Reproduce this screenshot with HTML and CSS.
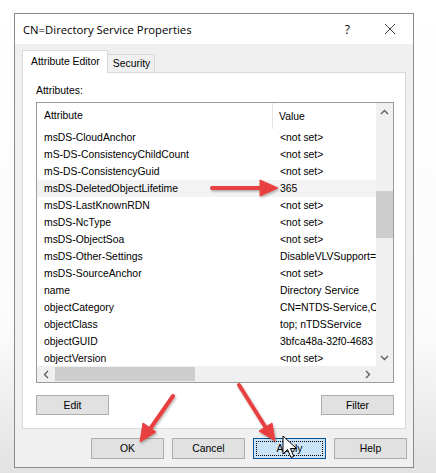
FILE: index.html
```html
<!DOCTYPE html>
<html lang="en">
<head>
    <meta charset="utf-8">
    <title>CN=Directory Service Properties</title>
    <link rel="stylesheet" href="styles.css">
</head>
<body>
    <div class="dialog">
        <div class="titlebar">
            <span class="title">CN=Directory Service Properties</span>
            <span class="help-q">?</span>
            <svg class="close" width="12" height="12" viewBox="0 0 12 12">
                <path d="M1 1 L11 11 M11 1 L1 11" stroke="#333" stroke-width="0.9" fill="none"/>
            </svg>
        </div>

        <div class="tabs">
            <div class="tab active">Attribute Editor</div>
            <div class="tab">Security</div>
        </div>

        <div class="panel">
            <div class="label">Attributes:</div>

            <div class="list">
                <div class="list-top">
                    <div class="list-main">
                        <div class="list-head">
                            <div class="col-attr">Attribute</div>
                            <div class="col-val">Value</div>
                        </div>
                        <div class="rows">
                            <div class="row"><div class="col-attr">msDS-CloudAnchor</div><div class="col-val">&lt;not set&gt;</div></div>
                            <div class="row"><div class="col-attr">mS-DS-ConsistencyChildCount</div><div class="col-val">&lt;not set&gt;</div></div>
                            <div class="row"><div class="col-attr">mS-DS-ConsistencyGuid</div><div class="col-val">&lt;not set&gt;</div></div>
                            <div class="row hover"><div class="col-attr">msDS-DeletedObjectLifetime</div><div class="col-val">365</div></div>
                            <div class="row"><div class="col-attr">msDS-LastKnownRDN</div><div class="col-val">&lt;not set&gt;</div></div>
                            <div class="row"><div class="col-attr">msDS-NcType</div><div class="col-val">&lt;not set&gt;</div></div>
                            <div class="row"><div class="col-attr">msDS-ObjectSoa</div><div class="col-val">&lt;not set&gt;</div></div>
                            <div class="row"><div class="col-attr">msDS-Other-Settings</div><div class="col-val">DisableVLVSupport=</div></div>
                            <div class="row"><div class="col-attr">msDS-SourceAnchor</div><div class="col-val">&lt;not set&gt;</div></div>
                            <div class="row"><div class="col-attr">name</div><div class="col-val">Directory Service</div></div>
                            <div class="row"><div class="col-attr">objectCategory</div><div class="col-val">CN=NTDS-Service,C</div></div>
                            <div class="row"><div class="col-attr">objectClass</div><div class="col-val">top; nTDSService</div></div>
                            <div class="row"><div class="col-attr">objectGUID</div><div class="col-val">3bfca48a-32f0-4683</div></div>
                            <div class="row"><div class="col-attr">objectVersion</div><div class="col-val">&lt;not set&gt;</div></div>
                        </div>
                    </div>
                    <div class="vscroll">
                        <div class="sb-btn">
                            <svg width="9" height="6" viewBox="0 0 9 6"><path d="M1 5 L4.5 1.5 L8 5" stroke="#606060" stroke-width="1.4" fill="none"/></svg>
                        </div>
                        <div class="vtrack"><div class="vthumb"></div></div>
                        <div class="sb-btn">
                            <svg width="9" height="6" viewBox="0 0 9 6"><path d="M1 1 L4.5 4.5 L8 1" stroke="#606060" stroke-width="1.4" fill="none"/></svg>
                        </div>
                    </div>
                </div>
                <div class="hscroll">
                    <div class="sb-btn">
                        <svg width="6" height="9" viewBox="0 0 6 9"><path d="M5 1 L1.5 4.5 L5 8" stroke="#606060" stroke-width="1.4" fill="none"/></svg>
                    </div>
                    <div class="htrack"><div class="hthumb"></div></div>
                    <div class="sb-btn">
                        <svg width="6" height="9" viewBox="0 0 6 9"><path d="M1 1 L4.5 4.5 L1 8" stroke="#606060" stroke-width="1.4" fill="none"/></svg>
                    </div>
                    <div class="corner"></div>
                </div>
            </div>

            <div class="list-buttons">
                <button class="btn">Edit</button>
                <button class="btn">Filter</button>
            </div>
        </div>

        <div class="dialog-buttons">
            <button class="btn">OK</button>
            <button class="btn">Cancel</button>
            <button class="btn focused"><span class="focus-ring">Apply</span></button>
            <button class="btn">Help</button>
        </div>
    </div>

    <!-- annotation arrows and mouse pointer drawn over the dialog -->
    <svg class="annotations" width="436" height="473" viewBox="0 0 436 473">
        <defs>
            <filter id="shadow" x="-20%" y="-20%" width="140%" height="140%">
                <feDropShadow dx="1" dy="1.5" stdDeviation="1.2" flood-color="#000" flood-opacity="0.3"/>
            </filter>
        </defs>
        <g fill="#e8403f" stroke="#e8403f" filter="url(#shadow)">
            <line x1="212" y1="188" x2="262" y2="188" stroke-width="4" stroke-linecap="round"/>
            <polygon points="278,188 260,180 260,196" stroke-width="1" stroke-linejoin="round"/>

            <line x1="173" y1="396" x2="150" y2="429" stroke-width="4" stroke-linecap="round"/>
            <polygon points="140,442 143,423 156,432" stroke-width="1" stroke-linejoin="round"/>

            <line x1="239" y1="385" x2="266" y2="428" stroke-width="4" stroke-linecap="round"/>
            <polygon points="275,441 259,431 272,423" stroke-width="1" stroke-linejoin="round"/>
        </g>
        <path d="M283 436 L283 454 L287.5 449.5 L291 457.5 L293.8 456.3 L290.4 448.5 L296.5 448.5 Z" fill="#fff" stroke="#000" stroke-width="1" stroke-linejoin="round"/>
    </svg>
</body>
</html>
```

FILE: styles.css
```css
body {
    margin: 0;
    width: 436px;
    height: 473px;
    overflow: hidden;
    background: linear-gradient(to bottom, #ffffff 0%, #fbfbfb 70%, #e2e2e2 100%);
    font-family: "Liberation Sans", Arial, sans-serif;
    font-size: 10.4px;
    color: #000000;
}
.dialog {
    margin: 13px 0 0 14px;
    width: 400px;
    height: 455px;
    box-sizing: border-box;
    border: 1px solid #8a8a8a;
    background-color: #f0f0f0;
    display: flex;
    flex-direction: column;
}
.titlebar {
    height: 30px;
    flex: none;
    background-color: #ffffff;
    display: flex;
    align-items: center;
    padding-left: 8px;
}
.title {
    font-family: "Open Sans", "Noto Sans", sans-serif;
    font-size: 11.3px;
    color: #000000;
    flex: 1;
}
.help-q {
    font-family: "Open Sans", sans-serif;
    font-size: 12px;
    margin-right: 34px;
}
.close {
    margin-right: 17px;
}
.tabs {
    margin-top: 6px;
    height: 22px;
    flex: none;
    display: flex;
    align-items: flex-end;
    padding-left: 7px;
}
.tab {
    box-sizing: border-box;
    height: 18px;
    padding: 0 4px 0 5px;
    line-height: 17px;
    border: 1px solid #d9d9d9;
    border-bottom: none;
    border-left: none;
    background-color: #f0f0f0;
}
.tab.active {
    position: relative;
    z-index: 1;
    height: 23px;
    margin-bottom: -1px;
    padding: 0 7px 0 8px;
    line-height: 21px;
    border-left: 1px solid #d9d9d9;
    background-color: #ffffff;
}
.panel {
    margin: 0 7px;
    height: 357px;
    flex: none;
    box-sizing: border-box;
    border: 1px solid #d9d9d9;
    background-color: #ffffff;
    padding: 0 11px 0 13px;
}
.label {
    margin-top: 12px;
    height: 12px;
    line-height: 12px;
    margin-bottom: 5px;
}
.list {
    height: 281px;
    box-sizing: border-box;
    border: 1px solid #9b9b9b;
    display: flex;
    flex-direction: column;
    overflow: hidden;
}
.list-top {
    display: flex;
    height: 263px;
}
.list-main {
    flex: 1;
    overflow: hidden;
}
.list-head {
    display: flex;
    height: 26px;
    align-items: center;
}
.list-head .col-attr {
    border-right: 1px solid #e5e5e5;
    height: 26px;
    line-height: 26px;
}
.rows {
    height: 237px;
    overflow: hidden;
}
.row {
    display: flex;
    height: 17px;
    line-height: 17px;
}
.row.hover {
    background-color: #f3f3f3;
}
.col-attr {
    width: 236px;
    flex: none;
    box-sizing: border-box;
    padding-left: 7px;
    white-space: nowrap;
}
.col-val {
    padding-left: 7px;
    white-space: nowrap;
}
.list-head .col-val {
    padding-left: 6px;
}
.vscroll {
    width: 17px;
    flex: none;
    background-color: #f0f0f0;
    display: flex;
    flex-direction: column;
}
.sb-btn {
    width: 17px;
    height: 17px;
    flex: none;
    display: flex;
    align-items: center;
    justify-content: center;
}
.vtrack {
    flex: 1;
    padding-top: 71px;
}
.vthumb {
    width: 17px;
    height: 47px;
    background-color: #cdcdcd;
}
.hscroll {
    display: flex;
    flex: 1;
    background-color: #f0f0f0;
    align-items: stretch;
}
.hscroll .sb-btn {
    height: auto;
}
.htrack {
    flex: 1;
    padding: 1px 0;
}
.hthumb {
    width: 140px;
    height: 100%;
    margin-left: 1px;
    background-color: #cdcdcd;
}
.corner {
    width: 17px;
    flex: none;
    background-color: #f0f0f0;
}
.list-buttons {
    display: flex;
    justify-content: space-between;
    margin-top: 12px;
}
.btn {
    width: 73px;
    height: 20px;
    box-sizing: border-box;
    border: 1px solid #adadad;
    background-color: #e1e1e1;
    font-family: "Liberation Sans", Arial, sans-serif;
    font-size: 10.4px;
    color: #000000;
    padding: 0;
}
.dialog-buttons {
    display: flex;
    justify-content: flex-end;
    gap: 8px;
    margin-top: 9px;
    padding-right: 6px;
}
.dialog-buttons .btn {
    height: 21px;
}
.btn.focused {
    background-color: #cce4f7;
    border-color: #005499;
    padding: 2px;
}
.focus-ring {
    display: flex;
    height: 100%;
    align-items: center;
    justify-content: center;
    box-sizing: border-box;
    border: 1px dotted #000000;
}
.annotations {
    position: absolute;
    left: 0;
    top: 0;
    pointer-events: none;
}
```
